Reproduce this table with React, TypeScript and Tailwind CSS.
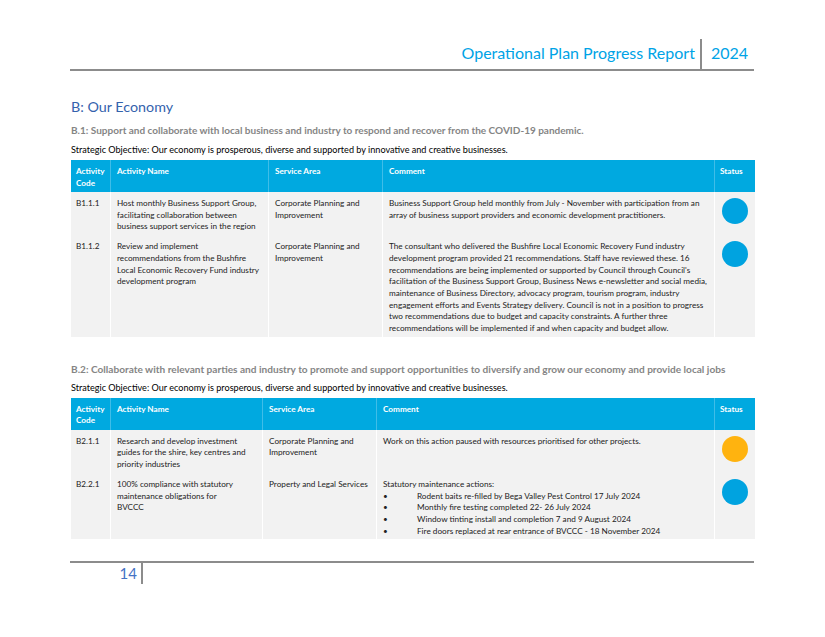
const FONT = "font-['Lato','Open_Sans',sans-serif]"

type Row = {
  code: string
  name: React.ReactNode
  area: string
  comment: React.ReactNode
  status: 'blue' | 'amber'
}

const B1: Row[] = [
  {
    code: 'B1.1.1',
    name: 'Host monthly Business Support Group, facilitating collaboration between business support services in the region',
    area: 'Corporate Planning and Improvement',
    comment:
      'Business Support Group held monthly from July - November with participation from an array of business support providers and economic development practitioners.',
    status: 'blue',
  },
  {
    code: 'B1.1.2',
    name: 'Review and implement recommendations from the Bushfire Local Economic Recovery Fund industry development program',
    area: 'Corporate Planning and Improvement',
    comment:
      "The consultant who delivered the Bushfire Local Economic Recovery Fund industry development program provided 21 recommendations. Staff have reviewed these. 16 recommendations are being implemented or supported by Council through Council's facilitation of the Business Support Group, Business News e-newsletter and social media, maintenance of Business Directory, advocacy program, tourism program, industry engagement efforts and Events Strategy delivery. Council is not in a position to progress two recommendations due to budget and capacity constraints. A further three recommendations will be implemented if and when capacity and budget allow.",
    status: 'blue',
  },
]

const bullets = [
  'Rodent baits re-filled by Bega Valley Pest Control 17 July 2024',
  'Monthly fire testing completed 22- 26 July 2024',
  'Window tinting install and completion 7 and 9 August 2024',
  'Fire doors replaced at rear entrance of BVCCC - 18 November 2024',
]

const B2: Row[] = [
  {
    code: 'B2.1.1',
    name: 'Research and develop investment guides for the shire, key centres and priority industries',
    area: 'Corporate Planning and Improvement',
    comment: 'Work on this action paused with resources prioritised for other projects.',
    status: 'amber',
  },
  {
    code: 'B2.2.1',
    name: (
      <>
        100% compliance with statutory maintenance obligations for
        <br />
        BVCCC
      </>
    ),
    area: 'Property and Legal Services',
    comment: (
      <>
        <p>Statutory maintenance actions:</p>
        {bullets.map((b) => (
          <div key={b} className="flex">
            <span className="w-[34px] shrink-0">•</span>
            <span>{b}</span>
          </div>
        ))}
      </>
    ),
    status: 'blue',
  },
]

function PlanTable({ rows, cols }: { rows: Row[]; cols: string }) {
  return (
    <div className="w-[684px] text-[8.2px] leading-[11.7px]">
      <div className={`grid ${cols} h-[32px] bg-[#00a9e0] text-white font-bold`}>
        <div className="px-[5px] pt-[6px] border-r border-[#3fbde8]">Activity<br />Code</div>
        <div className="px-[6px] pt-[6px] border-r border-[#3fbde8]">Activity Name</div>
        <div className="px-[6px] pt-[6px] border-r border-[#3fbde8]">Service Area</div>
        <div className="px-[6px] pt-[6px] border-r border-[#3fbde8]">Comment</div>
        <div className="px-[5px] pt-[6px]">Status</div>
      </div>
      {rows.map((r) => (
        <div key={r.code} className={`grid ${cols} bg-[#f2f2f2] text-[#222]`}>
          <div className="px-[5px] pt-[6px] pb-[2px] border-r border-white">{r.code}</div>
          <div className="px-[6px] pt-[6px] pb-[2px] border-r border-white">{r.name}</div>
          <div className="px-[6px] pt-[6px] pb-[2px] border-r border-white">{r.area}</div>
          <div className="px-[6px] pt-[6px] pb-[2px] border-r border-white">{r.comment}</div>
          <div className="flex justify-center pt-[6px]">
            <span
              className={`block w-[26px] h-[26px] rounded-full ${
                r.status === 'blue' ? 'bg-[#00a3e0]' : 'bg-[#ffb30f]'
              }`}
            />
          </div>
        </div>
      ))}
    </div>
  )
}

export default function App() {
  return (
    <div className={`w-[825px] h-[637px] bg-white ${FONT} overflow-hidden`}>
      {/* Page header */}
      <div className="ml-[70px] w-[684px] h-[71px] flex items-end justify-end border-b-2 border-[#8c8c8c]">
        <div className="flex items-end">
          <span className="text-[16px] text-[#00a3e6] pb-[4px] pr-[5px]">Operational Plan Progress Report</span>
          <span className="w-[2px] h-[30px] bg-[#8c8c8c]" />
          <span className="text-[16px] text-[#00a3e6] pb-[4px] pl-[9px] pr-[6px]">2024</span>
        </div>
      </div>

      <div className="pl-[71px]">
        <h1 className="mt-[27px] text-[14.3px] leading-[18px] text-[#3462ad]">B: Our Economy</h1>
        <h2 className="mt-[8px] text-[10px] leading-[12px] font-bold text-[#858585]">
          B.1: Support and collaborate with local business and industry to respond and recover from the COVID-19 pandemic.
        </h2>
        <p className="mt-[8px] text-[9.1px] leading-[12px] text-black">
          Strategic Objective: Our economy is prosperous, diverse and supported by innovative and creative businesses.
        </p>
        <div className="mt-[4px]">
          <PlanTable rows={B1} cols="grid-cols-[40px_158px_114px_332px_40px]" />
        </div>

        <h2 className="mt-[26px] text-[10.1px] leading-[12px] font-bold text-[#858585]">
          B.2: Collaborate with relevant parties and industry to promote and support opportunities to diversify and grow our economy and provide local jobs
        </h2>
        <p className="mt-[7px] text-[9.1px] leading-[12px] text-black">
          Strategic Objective: Our economy is prosperous, diverse and supported by innovative and creative businesses.
        </p>
        <div className="mt-[4px]">
          <PlanTable rows={B2} cols="grid-cols-[40px_152px_114px_338px_40px]" />
        </div>
      </div>

      {/* Footer */}
      <div className="ml-[70px] mt-[22px] w-[684px] border-t-2 border-[#8c8c8c] flex">
        <span className="w-[71px] text-right text-[15px] leading-[20px] text-[#4472c4] pr-[4px]">14</span>
        <span className="w-[2px] h-[21px] bg-[#8c8c8c]" />
      </div>
    </div>
  )
}
